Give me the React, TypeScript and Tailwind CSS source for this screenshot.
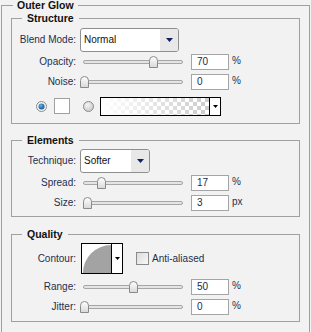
import React from "react";

const LBL = "w-[64px] shrink-0 text-right text-[10px] leading-none text-[#1e2f4d]";

function Thumb() {
  return (
    <svg width="9" height="12" viewBox="0 0 9 12">
      <defs>
        <linearGradient id="thg" x1="0" y1="0" x2="0" y2="1">
          <stop offset="0" stopColor="#ffffff" />
          <stop offset="1" stopColor="#d8d8d8" />
        </linearGradient>
      </defs>
      <path d="M0.5 11.5 V4.5 Q0.5 0.5 4.5 0.5 Q8.5 0.5 8.5 4.5 V11.5 Z" fill="url(#thg)" stroke="#8a8a8a" />
    </svg>
  );
}

function Slider({ v }: { v: number }) {
  return (
    <div className="relative ml-[4px] h-[12px] w-[104px] shrink-0">
      <div className="absolute left-[3px] right-[1px] top-[4px] h-[4px] rounded-full border border-[#a6a6a6] bg-[#e4e4e4]" />
      <div className="absolute top-0 h-[12px] w-[9px]" style={{ left: Math.round(v * 0.98) }}>
        <Thumb />
      </div>
    </div>
  );
}

function NumBox({ value, unit }: { value: string; unit: string }) {
  return (
    <>
      <div className="ml-[7px] flex h-[16px] w-[38px] shrink-0 items-center border border-[#a5a5a5] bg-white pl-[5px] text-[10px] leading-none text-[#1b2a4a]">
        {value}
      </div>
      <div className="mb-[3px] ml-[3px] text-[10px] leading-none text-[#1e2f4d]">{unit}</div>
    </>
  );
}

function SliderRow({ label, v, unit }: { label: string; v: number; unit: string }) {
  return (
    <div className="flex h-[20px] items-center">
      <div className={LBL}>{label}</div>
      <Slider v={v} />
      <NumBox value={String(v)} unit={unit} />
    </div>
  );
}

function Select({ value, w }: { value: string; w: string }) {
  return (
    <div className={`ml-[4px] flex h-[24px] shrink-0 overflow-hidden rounded-[3px] border border-[#8e8f8f] bg-white ${w}`}>
      <div className="flex flex-1 items-center pl-[3px] text-[10px] leading-none text-[#111]">{value}</div>
      <div className="flex w-[18px] items-center justify-center bg-[#e8e8e8]">
        <svg width="7" height="4" viewBox="0 0 7 4">
          <path d="M0 0 H7 L3.5 4 Z" fill="#14205a" />
        </svg>
      </div>
    </div>
  );
}

function Radio({ on }: { on: boolean }) {
  return (
    <svg width="11" height="11" viewBox="0 0 11 11" className="shrink-0">
      <defs>
        <radialGradient id="rg-off" cx="0.4" cy="0.35" r="0.7">
          <stop offset="0" stopColor="#f4f4f4" />
          <stop offset="1" stopColor="#c8c8c8" />
        </radialGradient>
        <radialGradient id="rg-on" cx="0.4" cy="0.35" r="0.7">
          <stop offset="0" stopColor="#5fb4ee" />
          <stop offset="1" stopColor="#0b4f94" />
        </radialGradient>
      </defs>
      <circle cx="5.5" cy="5.5" r="5" fill={on ? "#f4f4f4" : "url(#rg-off)"} stroke="#8a8a8a" />
      {on && <circle cx="5.5" cy="5.5" r="3" fill="url(#rg-on)" />}
    </svg>
  );
}

function GradientSwatch() {
  return (
    <div className="ml-[6px] flex h-[19px] w-[121px] shrink-0 border border-black bg-white">
      <svg width="108" height="17" viewBox="0 0 108 17" className="block">
        <defs>
          <pattern id="chk" width="8" height="8" patternUnits="userSpaceOnUse">
            <rect width="8" height="8" fill="#ffffff" />
            <rect width="4" height="4" fill="#cccccc" />
            <rect x="4" y="4" width="4" height="4" fill="#cccccc" />
          </pattern>
          <linearGradient id="wg" x1="0" y1="0" x2="1" y2="0">
            <stop offset="0" stopColor="#ffffff" stopOpacity="1" />
            <stop offset="1" stopColor="#ffffff" stopOpacity="0" />
          </linearGradient>
        </defs>
        <rect width="108" height="17" fill="url(#chk)" />
        <rect width="108" height="17" fill="url(#wg)" />
      </svg>
      <div className="flex flex-1 items-center justify-center border-l border-black">
        <svg width="5" height="3" viewBox="0 0 5 3">
          <path d="M0 0 H5 L2.5 3 Z" fill="#000" />
        </svg>
      </div>
    </div>
  );
}

function Contour() {
  return (
    <div className="ml-[5px] flex h-[31px] w-[42px] shrink-0 border border-black bg-white">
      <svg width="29" height="29" viewBox="0 0 29 29" className="block">
        <path d="M1 29 A28 28 0 0 1 29 1 L29 29 Z" fill="#a3a3a3" />
      </svg>
      <div className="flex flex-1 items-center justify-center border-l border-black">
        <svg width="5" height="3" viewBox="0 0 5 3">
          <path d="M0 0 H5 L2.5 3 Z" fill="#000" />
        </svg>
      </div>
    </div>
  );
}

function Group({ title, className, children }: { title: string; className: string; children: React.ReactNode }) {
  return (
    <fieldset className={`min-w-0 border border-[#a0a0a0] px-0 ${className}`}>
      <legend className="ml-[10px] px-[5px] text-[10.5px] font-bold leading-[10px] text-[#111]">{title}</legend>
      {children}
    </fieldset>
  );
}

export default function App() {
  return (
    <div className="h-[332px] w-[311px] overflow-hidden bg-[#f2f2f2] font-['Liberation_Sans',Arial,sans-serif]">
      <fieldset className="ml-[1px] w-[309px] min-w-0 border border-[#a0a0a0] px-[9px] pb-[20px] pt-[3px]">
        <legend className="ml-[2px] px-[4px] text-[10.5px] font-bold leading-[10px] text-[#111]">Outer Glow</legend>

        <Group title="Structure" className="pb-[7px]">
          <div className="mt-[5px] flex h-[24px] items-center">
            <div className={LBL}>Blend Mode:</div>
            <Select value="Normal" w="w-[99px]" />
          </div>
          <SliderRow label="Opacity:" v={70} unit="%" />
          <SliderRow label="Noise:" v={0} unit="%" />
          <div className="mt-[4px] flex h-[20px] items-center">
            <div className="ml-[24px]">
              <Radio on={true} />
            </div>
            <div className="ml-[7px] h-[16px] w-[16px] shrink-0 border border-[#a0a0a0] bg-white" />
            <div className="ml-[13px]">
              <Radio on={false} />
            </div>
            <GradientSwatch />
          </div>
        </Group>

        <Group title="Elements" className="mt-[11px] pb-[3px]">
          <div className="mt-[4px] flex h-[24px] items-center">
            <div className={LBL}>Technique:</div>
            <Select value="Softer" w="w-[70px]" />
          </div>
          <SliderRow label="Spread:" v={17} unit="%" />
          <SliderRow label="Size:" v={3} unit="px" />
        </Group>

        <Group title="Quality" className="mt-[12px] pb-[4px]">
          <div className="mt-[4px] flex h-[31px] items-center">
            <div className={LBL}>Contour:</div>
            <Contour />
            <div className="ml-[13px] h-[13px] w-[13px] shrink-0 border border-[#8a8a8a] bg-gradient-to-br from-[#dcdcdc] to-[#f8f8f8]" />
            <div className="ml-[3px] text-[10px] leading-none text-[#1e2f4d]">Anti-aliased</div>
          </div>
          <div className="mt-[3px]">
            <SliderRow label="Range:" v={50} unit="%" />
            <SliderRow label="Jitter:" v={0} unit="%" />
          </div>
        </Group>
      </fieldset>
    </div>
  );
}
